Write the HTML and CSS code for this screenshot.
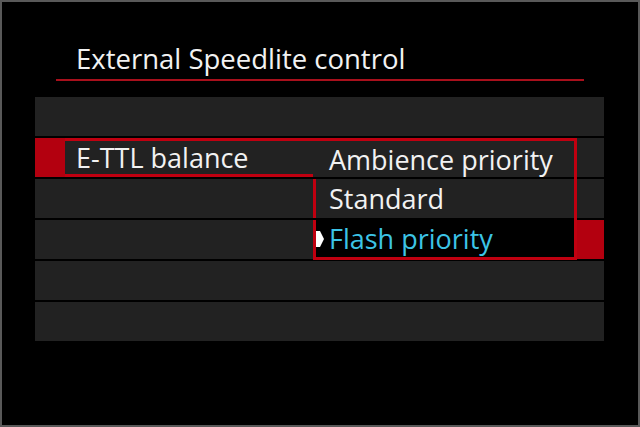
FILE: index.html
```html
<!DOCTYPE html>
<html lang="en">
<head>
  <meta charset="UTF-8">
  <title>External Speedlite control</title>
  <link rel="stylesheet" href="styles.css">
</head>
<body>
<div class="screen">
  <h1 class="title">External Speedlite control</h1>
  <div class="title-line"></div>

  <div class="menu">
    <div class="row"></div>
    <div class="row row-active">
      <div class="red-tab"></div>
      <div class="label">E-TTL balance</div>
    </div>
    <div class="row"></div>
    <div class="row">
      <div class="red-tab red-tab-right"></div>
    </div>
    <div class="row"></div>
    <div class="row"></div>

    <div class="dropdown">
      <div class="option option-first">Ambience priority</div>
      <div class="option">Standard</div>
      <div class="option option-selected">
        <svg class="pointer" width="8" height="16" viewBox="0 0 8 16">
          <polygon points="0,0 4,0 8,8 4,16 0,16" fill="#ffffff"/>
        </svg>
        Flash priority
      </div>
    </div>
  </div>
</div>
</body>
</html>
```

FILE: styles.css
```css
body {
  margin: 0;
  background-color: #000;
  font-family: "Open Sans", "Noto Sans", sans-serif;
}

.screen {
  width: 640px;
  height: 427px;
  box-sizing: border-box;
  border: 2px solid #595959;
  background-color: #000;
}

.title {
  margin: 42px 0 0 74px;
  font-size: 27.5px;
  line-height: 30px;
  font-weight: normal;
  color: #f2f2f2;
}

.title-line {
  margin: 5px 0 0 54px;
  width: 528px;
  height: 2px;
  background-color: #a8101c;
}

.menu {
  position: relative;
  margin: 16px 0 0 33px;
  width: 569px;
  display: flex;
  flex-direction: column;
  gap: 2px;
}

.row {
  height: 39px;
  background-color: #222222;
  display: flex;
  align-items: stretch;
}

.red-tab {
  width: 30px;
  background-color: #b3000f;
}

.red-tab-right {
  margin-left: auto;
}

.label {
  width: 248px;
  box-sizing: border-box;
  border-top: 3px solid #c00010;
  border-bottom: 3px solid #c00010;
  padding-left: 11px;
  display: flex;
  align-items: center;
  font-size: 27px;
  color: #f2f2f2;
}

.dropdown {
  position: absolute;
  left: 278px;
  top: 41px;
  width: 264px;
  box-sizing: border-box;
  border-top: 3px solid #c00010;
  border-right: 3px solid #c00010;
  border-bottom: 3px solid #c00010;
  background-color: #000;
  display: flex;
  flex-direction: column;
  gap: 2px;
}

.option {
  position: relative;
  height: 39px;
  box-sizing: border-box;
  border-left: 3px solid #c00010;
  background-color: #222222;
  padding-left: 13px;
  display: flex;
  align-items: center;
  font-size: 27px;
  color: #f2f2f2;
}

.option-first {
  height: 36px;
  border-left: none;
  padding-left: 16px;
}

.option-selected {
  height: 37px;
  background-color: #000;
  color: #3cc4e6;
}

.pointer {
  position: absolute;
  left: 0;
  top: 11px;
}
```
